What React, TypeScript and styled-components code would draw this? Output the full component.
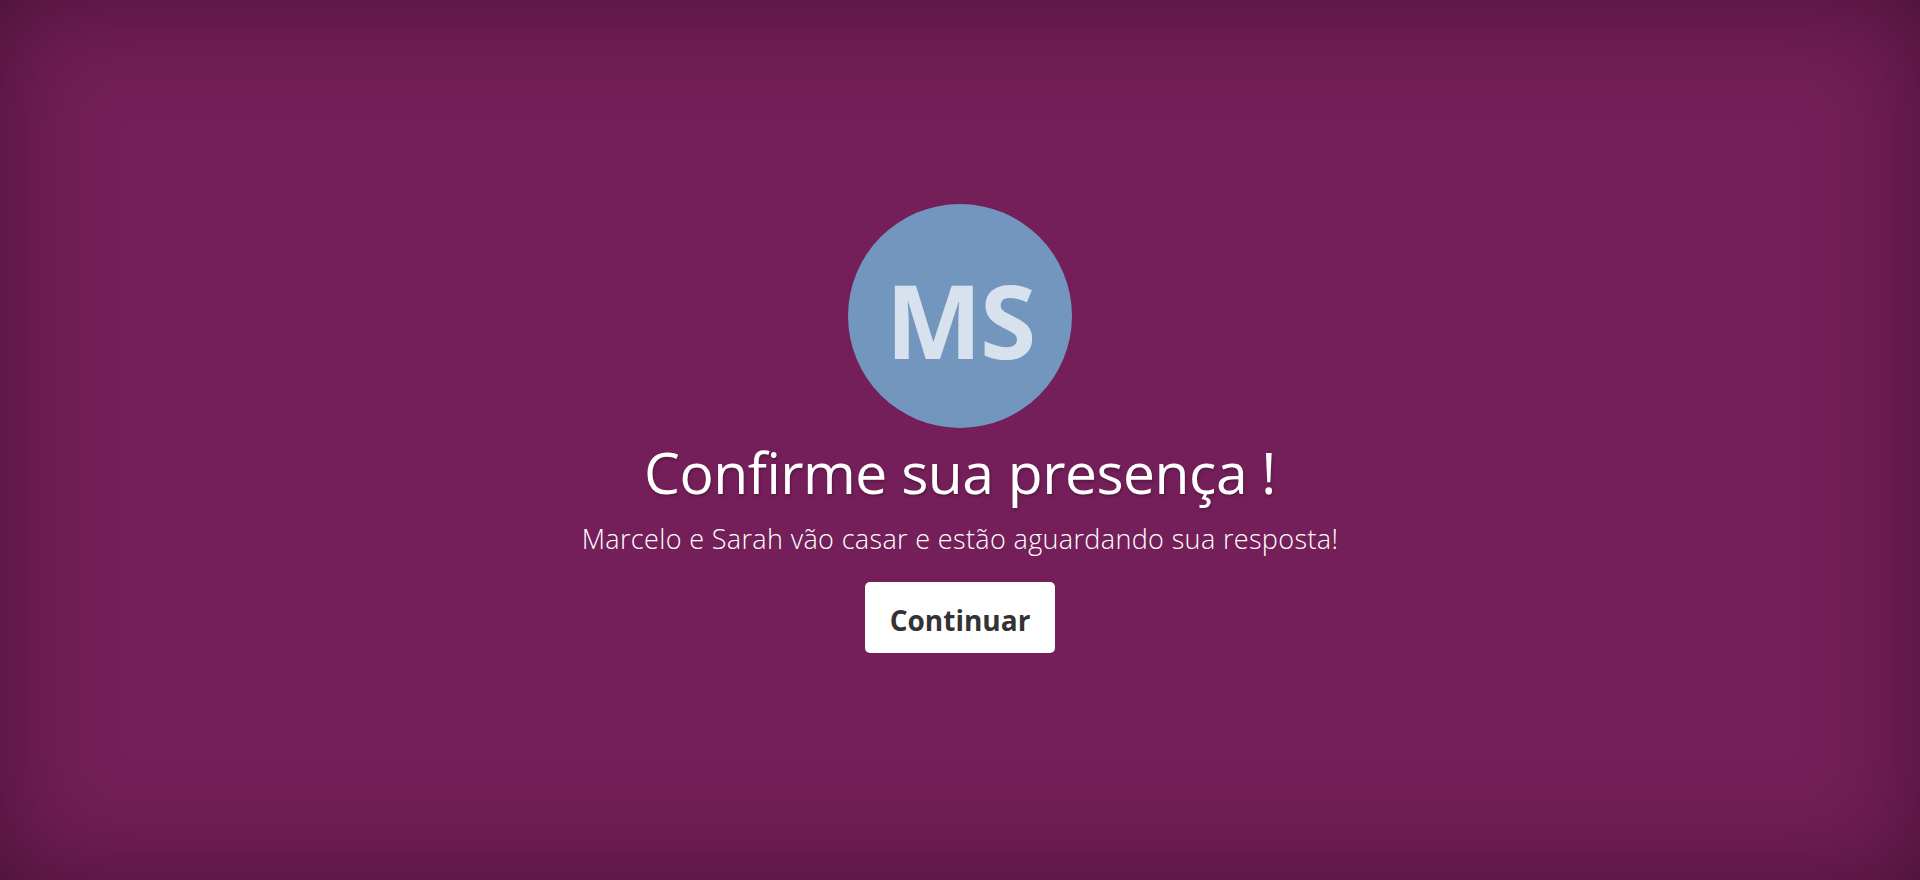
import React from "react";
import styled, { createGlobalStyle } from "styled-components";

const Global = createGlobalStyle`
  html, body { margin: 0; padding: 0; height: 100%; }
  body { font-family: "Open Sans", "Noto Sans", sans-serif; background: #741f58; }
  #root { height: 100%; }
`;

const Page = styled.main`
  box-sizing: border-box;
  height: 880px;
  width: 100%;
  background: #741f59;
  box-shadow: inset 0 0 110px rgba(20, 0, 15, 0.45);
  display: flex;
  flex-direction: column;
  align-items: center;
  padding-top: 204px;
  color: #ffffff;
`;

const Avatar = styled.div`
  box-sizing: border-box;
  width: 224px;
  height: 224px;
  padding-top: 7px;
  border-radius: 50%;
  background: #7396be;
  display: flex;
  align-items: center;
  justify-content: center;
  color: #d8e2ee;
  font-weight: 700;
  font-size: 102px;
  letter-spacing: -2px;
  line-height: 1;
`;

const Title = styled.h1`
  margin: 8px 0 0;
  font-weight: 400;
  font-size: 57px;
  line-height: 72px;
  letter-spacing: -0.5px;
  text-shadow: 1px 2px 3px rgba(0, 0, 0, 0.25);
`;

const Subtitle = styled.p`
  margin: 14px 0 0;
  font-weight: 300;
  font-size: 27px;
  line-height: 34px;
  letter-spacing: 0.35px;
`;

const Button = styled.button`
  box-sizing: border-box;
  margin-top: 26px;
  width: 190px;
  height: 71px;
  padding: 4px 0 0;
  border: none;
  border-radius: 5px;
  background: #ffffff;
  color: #333333;
  font-family: "Open Sans", "Noto Sans", sans-serif;
  font-weight: 700;
  font-size: 28px;
  cursor: pointer;
`;

export default function App() {
  return (
    <>
      <Global />
      <Page>
        <Avatar>MS</Avatar>
        <Title>Confirme sua presença !</Title>
        <Subtitle>Marcelo e Sarah vão casar e estão aguardando sua resposta!</Subtitle>
        <Button>Continuar</Button>
      </Page>
    </>
  );
}
